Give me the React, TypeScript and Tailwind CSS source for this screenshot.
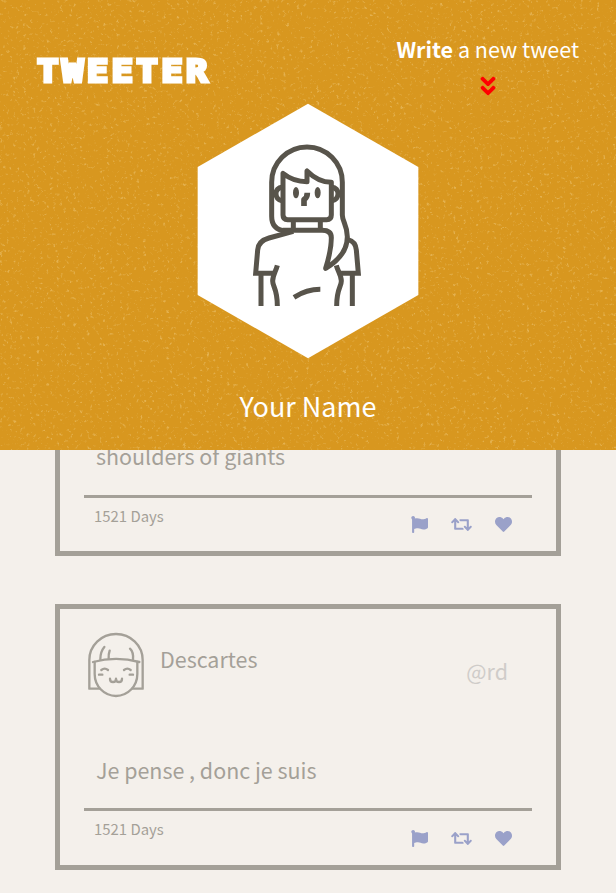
import { FaAngleDoubleDown, FaFlag, FaHeart, FaRetweet } from "react-icons/fa";

function Grain() {
  return (
    <svg className="absolute inset-0 h-full w-full" aria-hidden="true">
      <filter id="grain" x="0" y="0" width="100%" height="100%" colorInterpolationFilters="sRGB">
        <feTurbulence type="fractalNoise" baseFrequency="0.3" numOctaves="5" seed="8" />
        <feColorMatrix values="0 0 0 0 0.94  0 0 0 0 0.8  0 0 0 0 0.5  4 1.5 0 0 -3.25" />
      </filter>
      <rect width="100%" height="100%" filter="url(#grain)" opacity="0.5" />
    </svg>
  );
}

function Portrait() {
  return (
    <div className="h-[256px] w-[222px] bg-white [clip-path:polygon(50%_0.3%,99.7%_25%,99.7%_75%,50%_99.7%,0.3%_75%,0.3%_25%)]">
      <svg viewBox="21 24 666 768" className="h-full w-full" fill="none" stroke="#58544b" strokeWidth="15" strokeLinejoin="round">
        <path d="M285 408Q245 404 245 364V262A106 106 0 0 1 457 262V360C457 380 472 390 472 425C472 468 440 500 407 520Q424 465 424 428Q424 406 396 406H278" />
        <path d="M279 235V360Q279 374 293 374H410Q424 374 424 360V262Q385 262 351 228V260Q310 260 279 235Z" />
        <path d="M310 378V404M391 378V404" />
        <path d="M278 276Q258 279 258 296Q258 314 278 318M424 276Q444 279 444 296Q444 314 424 318" />
        <path d="M352 293Q352 307 342 314V333" strokeWidth="17" />
        <ellipse cx="318" cy="293" rx="9" ry="17" fill="#58544b" stroke="none" />
        <ellipse cx="383" cy="293" rx="9" ry="17" fill="#58544b" stroke="none" />
        <path d="M310 409L237 429Q205 438 203 465L197 535H253" strokeLinejoin="miter" />
        <path d="M474 434Q497 440 499 465L505 535H449" strokeLinejoin="miter" />
        <path d="M262 511C258 528 248 540 248 558C248 576 262 580 262 633M439 511C443 528 454 540 454 558C454 576 440 580 440 633" />
        <path d="M213 538V633M487 538V633M312 607Q350 583 391 583" />
      </svg>
    </div>
  );
}

function Avatar() {
  return (
    <svg viewBox="108 90 180 210" className="h-[70px] w-[60px] shrink-0" fill="none" stroke="#a4a098" strokeWidth="7" strokeLinecap="round" strokeLinejoin="round">
      <path d="M148 266H118V180A80 78 0 0 1 278 180V266H248" />
      <path d="M134 186V222A64 66 0 0 0 262 222V186" />
      <path d="M129 186Q198 167 268 186" />
      <path d="M151 178Q151 155 163 141M176 176Q175 163 179 152M249 178Q251 156 240 146" />
      <path d="M154 210Q164 202 174 210M222 210Q232 202 242 210M147 224H157M239 224H249" />
      <path d="M180 236Q180 246 189 246Q198 246 198 236Q198 246 207 246Q216 246 216 236" />
    </svg>
  );
}

interface TweetProps {
  name: string;
  handle: string;
  text: string;
  age: string;
}

function Tweet({ name, handle, text, age }: TweetProps) {
  return (
    <article className="flex h-[265.6px] flex-col border-[5px] border-[#a4a098] bg-[#f4f0eb] px-6 text-[#a4a098]">
      <header className="flex h-[110px] shrink-0 items-start pt-[21px]">
        <div className="pl-[2px]"><Avatar /></div>
        <h2 className="ml-[14px] pt-[13px] text-[21.45px] leading-8">{name}</h2>
        <span className="ml-auto mr-6 pt-[25px] text-[21.45px] leading-8 text-[#cfccc9]">{handle}</span>
      </header>
      <p className="ml-3 mt-[34.7px] h-[54.5px] shrink-0 text-[21.45px] leading-8">{text}</p>
      <footer className="flex justify-between border-t-[3px] border-[#a4a098] pl-[10px] pr-[20px]">
        <span className="pt-[6px] text-[14.9px] leading-6">{age}</span>
        <div className="flex gap-[23px] pt-[18.5px] text-[#9aa1c9]">
          <FaFlag size={17} />
          <FaRetweet className="h-[17px] w-[21px]" />
          <FaHeart size={17} />
        </div>
      </footer>
    </article>
  );
}

export default function App() {
  return (
    <div className="h-[893px] overflow-hidden bg-[#f4f0eb] font-['Noto_Sans_CJK_SC',sans-serif]">
      <header className="relative z-10 h-[450px] bg-[#d8971f] text-white">
        <Grain />
        <div className="relative flex h-full flex-col items-center">
          <div className="flex h-[103px] w-full justify-between pl-[37px] pr-[37px]">
            <h1 className="w-[150px] origin-left scale-x-[1.12] pt-[53px] font-['DejaVu_Sans_Mono'] text-[32px] leading-9 font-bold tracking-[2.9px] [-webkit-text-stroke:3.2px_white]">TWEETER</h1>
            <div className="flex flex-col items-center pt-[33px] text-[21.5px] leading-8">
              <p><strong className="font-bold">Write</strong> a new tweet</p>
              <FaAngleDoubleDown className="mt-[9px] size-6 shrink-0 text-[#ff0000]" />
            </div>
          </div>
          <Portrait />
          <p className="mt-[27px] text-[27px] leading-10">Your Name</p>
        </div>
      </header>
      <main className="-mt-[159.6px] flex flex-col gap-12 px-[55px]">
        <Tweet name="Newton" handle="@sir" text="shoulders of giants" age="1521 Days" />
        <Tweet name="Descartes" handle="@rd" text="Je pense , donc je suis" age="1521 Days" />
      </main>
    </div>
  );
}
